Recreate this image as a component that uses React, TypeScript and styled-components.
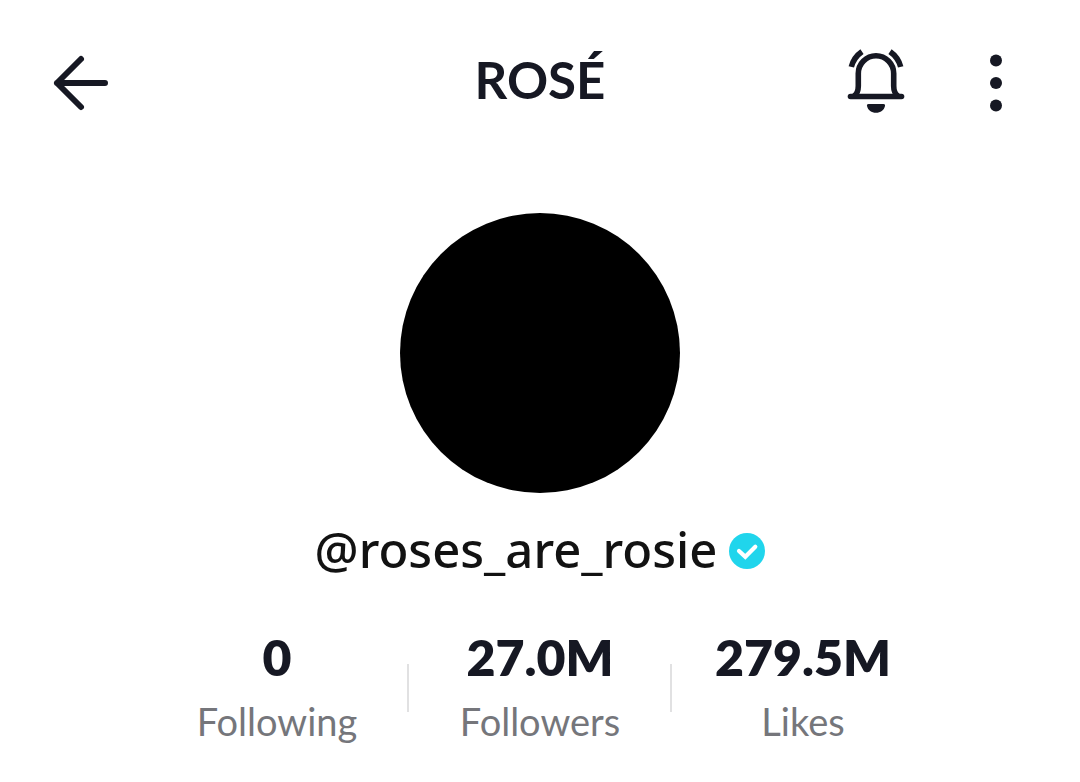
import React from "react";
import styled, { createGlobalStyle } from "styled-components";

const GlobalStyle = createGlobalStyle`
  *, *::before, *::after { box-sizing: border-box; }
  body {
    margin: 0;
    background: #ffffff;
    color: #161823;
    font-family: Lato, "Liberation Sans", sans-serif;
  }
`;

const Page = styled.main`
  display: flex;
  flex-direction: column;
`;

const Header = styled.header`
  display: grid;
  grid-template-columns: 1fr auto 1fr;
  align-items: center;
  height: 164px;
  padding: 0 48px;
`;

const Title = styled.h1`
  margin: 0;
  padding-bottom: 4px;
  font-size: 51px;
  line-height: 60px;
  font-weight: 700;
`;

const Actions = styled.div`
  display: flex;
  justify-content: flex-end;
  gap: 56px;
  padding-right: 4px;
`;

const IconButton = styled.button`
  display: flex;
  justify-content: center;
  width: 64px;
  padding: 0;
  border: 0;
  background: none;
  color: inherit;
  cursor: pointer;

  svg {
    overflow: visible;
  }
`;

const Profile = styled.section`
  display: flex;
  flex-direction: column;
  align-items: center;
  padding: 49px 24px 40px;
`;

const Avatar = styled.div`
  width: 280px;
  height: 280px;
  border-radius: 50%;
  background: #000000;
`;

const HandleRow = styled.div`
  display: flex;
  align-items: center;
  gap: 12px;
  margin-top: 28px;
`;

const Handle = styled.h2`
  margin: 0;
  padding-bottom: 4px;
  color: #121212;
  font-family: "Noto Sans", "Open Sans", sans-serif;
  font-size: 49px;
  line-height: 56px;
  font-weight: 500;
`;

const Stats = styled.ul`
  display: flex;
  justify-content: center;
  width: 100%;
  margin: 46px 0 0;
  padding: 0;
  list-style: none;
`;

const Stat = styled.li`
  display: flex;
  flex: 0 1 263px;
  flex-direction: column;
  align-items: center;
  position: relative;

  & + &::before {
    content: "";
    position: absolute;
    left: -2px;
    top: 37px;
    width: 2px;
    height: 48px;
    background: #e1e1e2;
  }
`;

const Count = styled.strong`
  font-size: 50px;
  line-height: 60px;
  font-weight: 800;
`;

const Label = styled.span`
  margin-top: 10px;
  color: #75767b;
  font-size: 38px;
  line-height: 48px;
  font-weight: 400;
`;

const stats = [
  { count: "0", label: "Following" },
  { count: "27.0M", label: "Followers" },
  { count: "279.5M", label: "Likes" },
];

const BackIcon = () => (
  <svg width="64" height="64" viewBox="0 0 64 64" fill="none" stroke="currentColor" strokeWidth="6" strokeLinecap="round" strokeLinejoin="round" aria-hidden="true">
    <path d="M33 9 9 33l24 24M9 33h48" />
  </svg>
);

const BellIcon = () => (
  <svg width="64" height="64" viewBox="0 0 64 64" fill="none" stroke="currentColor" strokeWidth="5.6" aria-hidden="true">
    <path d="M6.500 46.500h51" strokeLinecap="round" />
    <path d="M10 46c3-2 4.300-5 4.300-10V23.500a17.700 17.700 0 0 1 35.400 0V36c0 5 1.300 8 4.300 10" />
    <path d="M7.300 16.900A26.800 26.800 0 0 1 18 1.600M56.700 16.900A26.800 26.800 0 0 0 46 1.600" />
    <path d="M24.500 54h15c1.200 0 1.800.8 1.500 1.900-1 4.300-4.500 6.800-9 6.800s-8-2.500-9-6.800c-.3-1.100.3-1.900 1.500-1.900Z" fill="currentColor" stroke="none" />
  </svg>
);

const MoreIcon = () => (
  <svg width="64" height="64" viewBox="0 0 64 64" fill="currentColor" aria-hidden="true">
    <circle cx="32" cy="10.500" r="6" />
    <circle cx="32" cy="33" r="6" />
    <circle cx="32" cy="55.500" r="6" />
  </svg>
);

const VerifiedIcon = () => (
  <svg width="36" height="36" viewBox="0 0 36 36" role="img" aria-label="Verified">
    <circle cx="18" cy="18" r="18" fill="#20d5ec" />
    <path d="m10 18 6.300 5.800 10-10" fill="none" stroke="#fff" strokeWidth="4.200" strokeLinecap="round" strokeLinejoin="miter" />
  </svg>
);

export default function App() {
  return (
    <>
      <GlobalStyle />
      <Page>
        <Header>
          <IconButton type="button" aria-label="Back">
            <BackIcon />
          </IconButton>
          <Title>ROSÉ</Title>
          <Actions>
            <IconButton type="button" aria-label="Notifications">
              <BellIcon />
            </IconButton>
            <IconButton type="button" aria-label="More options">
              <MoreIcon />
            </IconButton>
          </Actions>
        </Header>
        <Profile>
          <Avatar role="img" aria-label="Profile photo" />
          <HandleRow>
            <Handle>@roses_are_rosie</Handle>
            <VerifiedIcon />
          </HandleRow>
          <Stats>
            {stats.map(({ count, label }) => (
              <Stat key={label}>
                <Count>{count}</Count>
                <Label>{label}</Label>
              </Stat>
            ))}
          </Stats>
        </Profile>
      </Page>
    </>
  );
}
